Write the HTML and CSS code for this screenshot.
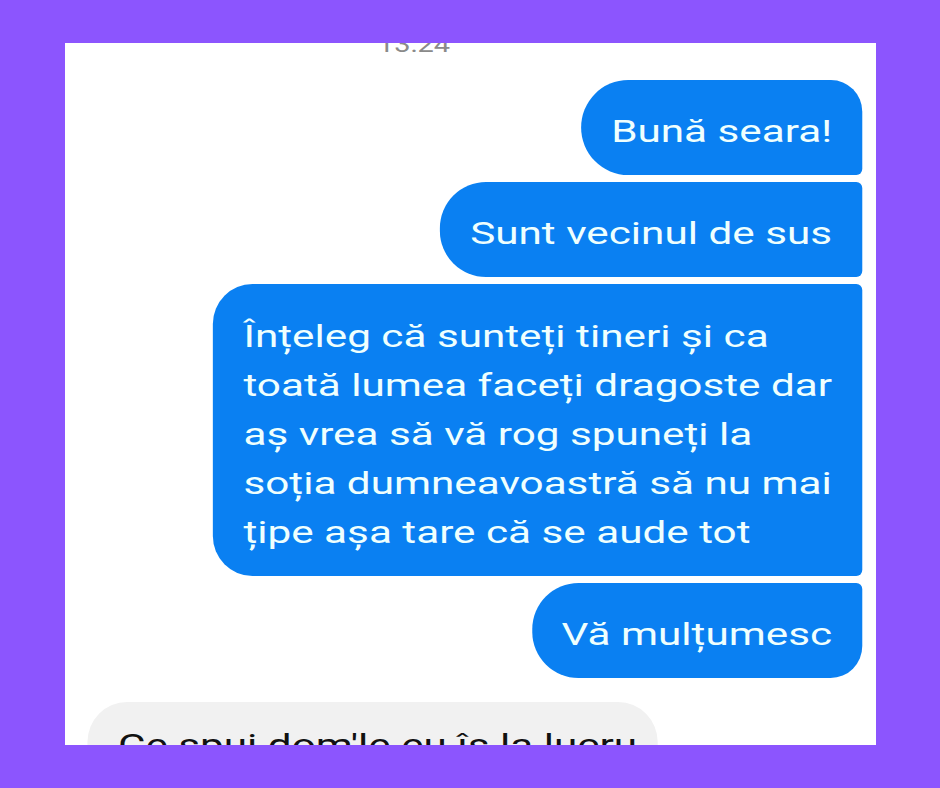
FILE: index.html
```html
<!DOCTYPE html>
<html lang="ro">
<head>
  <meta charset="UTF-8" />
  <meta name="viewport" content="width=device-width, initial-scale=1.0"/>
  <title>Vecinul de sus</title>
  <link rel="stylesheet" href="styles.css">
</head>
<body>

  <div class="card">
    <!-- the screenshot is stretched sideways, so the whole chat is too -->
    <div class="stretch">
      <div class="time">13:24</div>

      <div class="thread">
        <div class="msg out first">Bună seara!</div>
        <div class="msg out">Sunt vecinul de sus</div>
        <div class="msg out long">Înțeleg că sunteți tineri și ca<br>toată lumea faceți dragoste dar<br>aș vrea să vă rog spuneți la<br>soția dumneavoastră să nu mai<br>țipe așa tare că se aude tot</div>
        <div class="msg out last">Vă mulțumesc</div>
      </div>

      <div class="msg in">Ce spui dom'le eu îs la lucru</div>
    </div>
  </div>

</body>
</html>
```

FILE: styles.css
```css
* {
  box-sizing: border-box;
  margin: 0;
  padding: 0;
}

body {
  background-color: #8c55fe;
  font-family: Roboto, "Noto Sans", sans-serif;
  padding: 43px 64px 43px 65px;
}

.card {
  background-color: #fff;
  height: 702px;
  overflow: hidden;
}

/* horizontal sizes inside are divided by 1.32 */
.stretch {
  width: 614.4px;
  transform: scaleX(1.32);
  transform-origin: top left;
}

.time {
  color: #8a8a8a;
  font-size: 22px;
  line-height: 22px;
  margin-top: -9px;
  padding-left: 237px;
}

.thread {
  display: flex;
  flex-direction: column;
  align-items: flex-end;
  gap: 7px;
  margin-top: 24px;
  padding-right: 10.6px;
}

.msg {
  font-size: 32px;
  line-height: 49px;
  padding: 27px 22.7px 19px;
  white-space: nowrap;
}

.out {
  background-color: #0a80f2;
  color: #effffe;
  border-radius: 35px 4.5px 4.5px 35px / 46px 6px 6px 46px;
}

.out.first {
  border-radius: 36px 24px 4.5px 36px / 48px 32px 6px 48px;
}

.out.long {
  border-radius: 30px 4.5px 4.5px 30px / 40px 6px 6px 40px;
  padding-top: 28px;
}

.out.last {
  border-radius: 35px 4.5px 24px 35px / 46px 6px 32px 46px;
}

.in {
  background-color: #f1f1f1;
  color: #111;
  width: 431.8px;
  margin: 24px 0 0 17.4px;
  padding-top: 19px;
  border-radius: 30px 30px 30px 6px / 40px 40px 40px 8px;
}
```
